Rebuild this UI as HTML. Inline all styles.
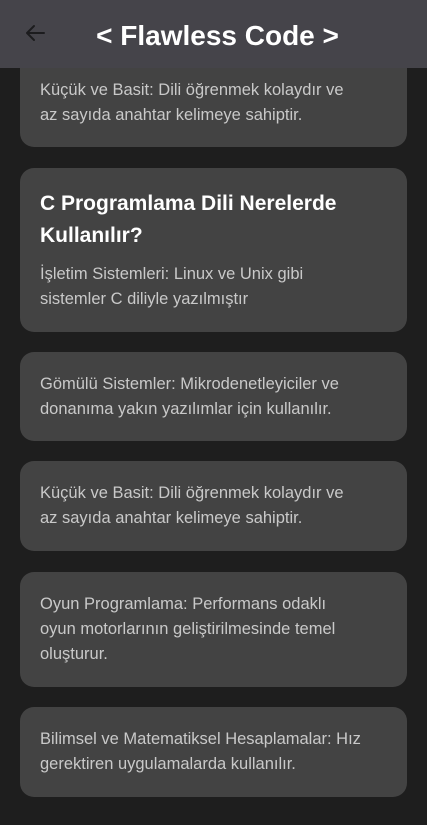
<!DOCTYPE html>
<html><head><meta charset="utf-8"><style>
*{margin:0;padding:0;box-sizing:border-box}
body{width:427px;height:825px;overflow:hidden;background:#1e1e1e;font-family:"Liberation Sans","DejaVu Sans",sans-serif;position:relative}
.hdr{position:absolute;left:0;top:0;width:427px;height:68px;background:#45444a;z-index:2}
.hdr h1{position:absolute;left:0;right:0;top:16px;text-align:center;color:#fff;font-size:28px;font-weight:bold;line-height:40px;padding-left:8px}
.hdr svg{position:absolute;left:23px;top:21px}
.card{position:absolute;left:20px;width:387px;background:#434343;border-radius:14px;padding:20px 20px;color:#c9c9c9;font-size:16.5px;line-height:25px;white-space:nowrap}
.card h2{color:#fff;font-size:21px;line-height:32px;font-weight:bold;margin-bottom:10px}
</style></head><body>
<div class="hdr">
<svg width="24" height="24" viewBox="0 0 24 24"><path d="M21 12H4M11 5l-7 7 7 7" stroke="#1c1c1e" stroke-width="2" fill="none" stroke-linecap="round" stroke-linejoin="round"/></svg>
<h1>&lt; Flawless Code &gt;</h1>
</div>
<div class="card" style="top:40px;height:107px;padding-top:38px">Küçük ve Basit: Dili öğrenmek kolaydır ve<br>az sayıda anahtar kelimeye sahiptir.</div>
<div class="card" style="top:168px;height:164px"><h2>C Programlama Dili Nerelerde<br>Kullanılır?</h2>İşletim Sistemleri: Linux ve Unix gibi<br>sistemler C diliyle yazılmıştır</div>
<div class="card" style="top:352px;height:89px">Gömülü Sistemler: Mikrodenetleyiciler ve<br>donanıma yakın yazılımlar için kullanılır.</div>
<div class="card" style="top:461px;height:90px">Küçük ve Basit: Dili öğrenmek kolaydır ve<br>az sayıda anahtar kelimeye sahiptir.</div>
<div class="card" style="top:572px;height:115px">Oyun Programlama: Performans odaklı<br>oyun motorlarının geliştirilmesinde temel<br>oluşturur.</div>
<div class="card" style="top:707px;height:90px">Bilimsel ve Matematiksel Hesaplamalar: Hız<br>gerektiren uygulamalarda kullanılır.</div>
</body></html>
